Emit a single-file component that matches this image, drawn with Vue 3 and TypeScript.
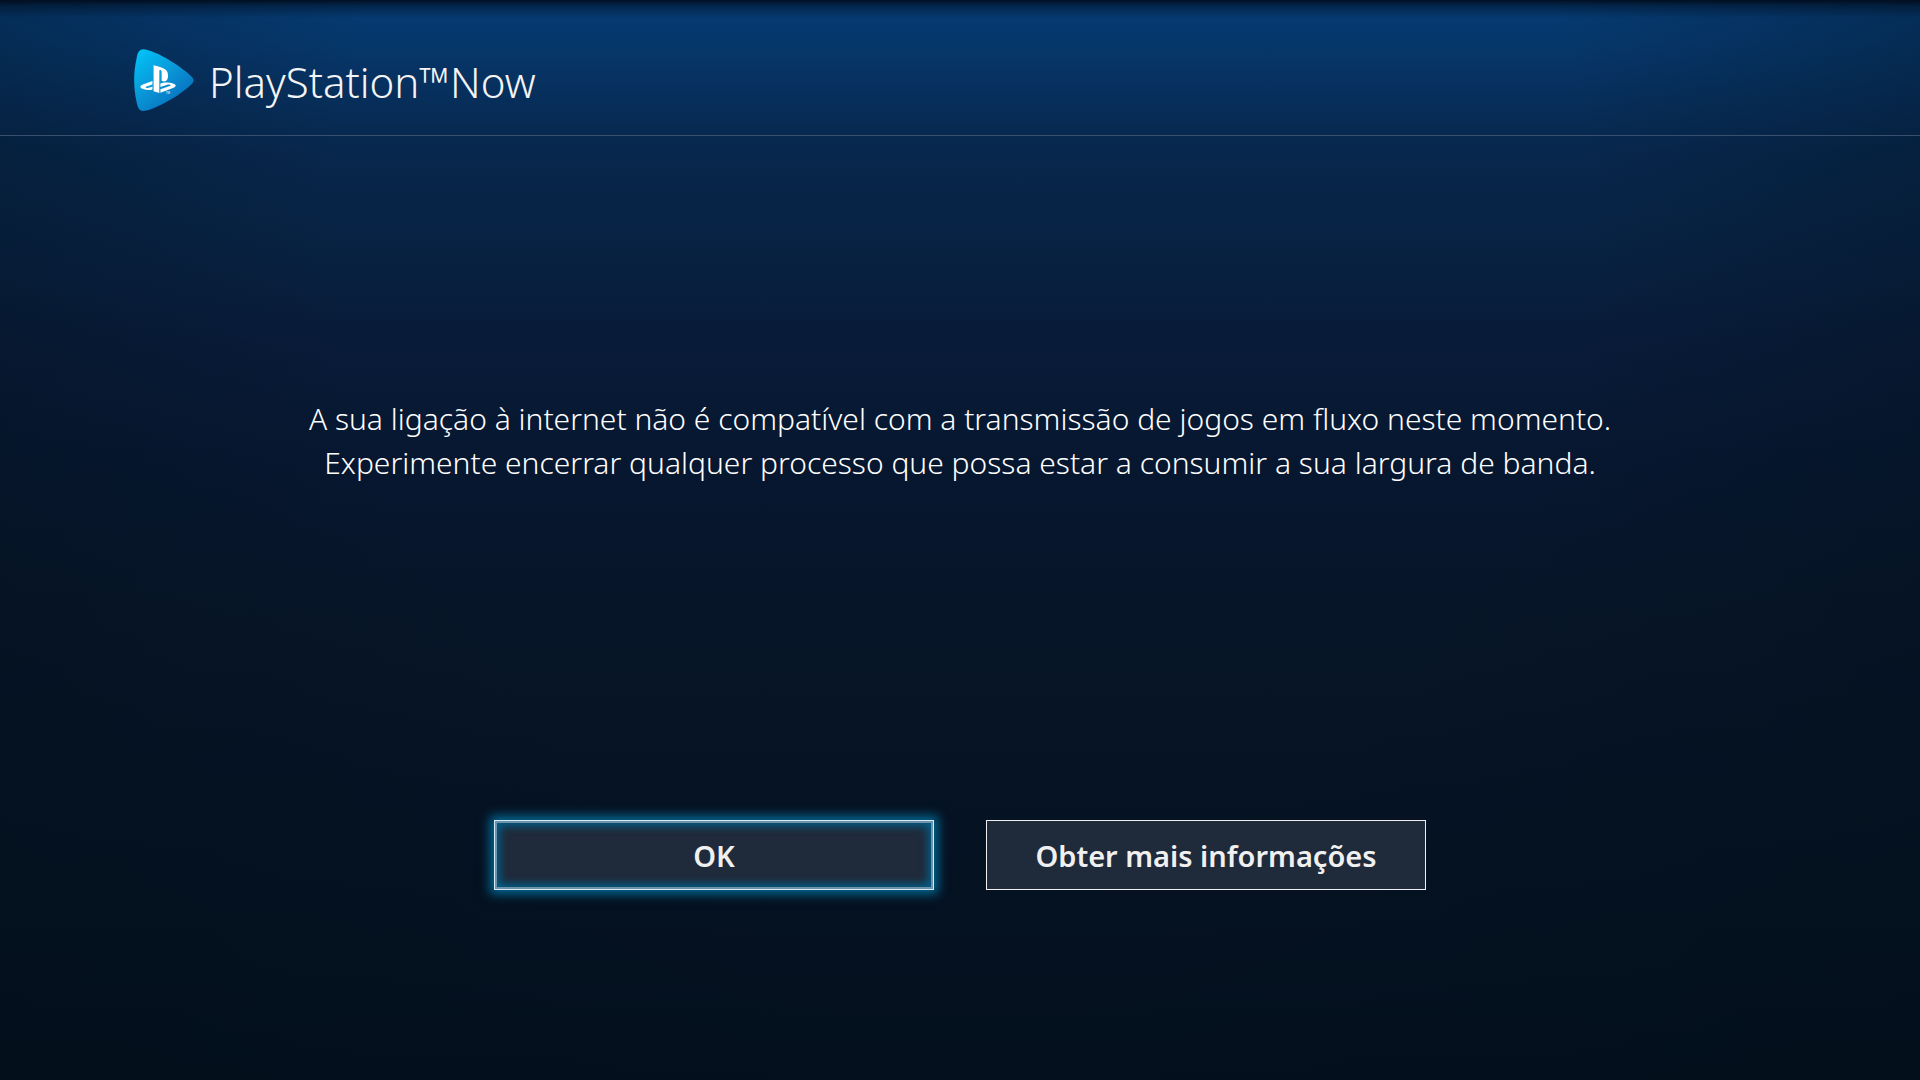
<script setup lang="ts">
import { ref } from 'vue'

interface Action {
  id: string
  label: string
}

const lines: string[] = [
  'A sua ligação à internet não é compatível com a transmissão de jogos em fluxo neste momento.',
  'Experimente encerrar qualquer processo que possa estar a consumir a sua largura de banda.',
]

const actions: Action[] = [
  { id: 'ok', label: 'OK' },
  { id: 'more', label: 'Obter mais informações' },
]

const selected = ref<string>('ok')
</script>

<template>
  <div class="screen">
    <header class="top">
      <svg class="logo" viewBox="43 38 180 186" aria-hidden="true">
        <defs>
          <linearGradient id="now" x1="0" y1="0" x2="0.8" y2="1">
            <stop offset="0" stop-color="#00c8fa" />
            <stop offset="0.5" stop-color="#0a97d8" />
            <stop offset="1" stop-color="#0668b8" />
          </linearGradient>
        </defs>
        <path
          fill="url(#now)"
          d="M70 39C96 38 173 81 213 118Q231 132 213 146C173 184 96 224 70 224C58 223 54 214 51 198C41 154 41 109 51 65C54 49 58 40 70 39Z"
        />
        <g fill="#fff">
          <path
            transform="translate(62 75.5) scale(4.42)"
            d="M8.984 2.596v17.547l3.915 1.261V6.688c0-.69.304-1.151.794-.991.636.18.76.814.76 1.505v5.875c2.441 1.193 4.362-.002 4.362-3.152 0-3.237-1.126-4.675-4.438-5.827-1.307-.448-3.728-1.186-5.39-1.502zm4.656 16.241l6.296-2.275c.715-.258.826-.625.246-.818-.586-.192-1.637-.139-2.357.123l-4.205 1.5V14.98l.24-.085s1.201-.42 2.913-.615c1.696-.18 3.785.03 5.437.661 1.848.601 2.04 1.472 1.576 2.072-.465.6-1.622 1.036-1.622 1.036l-8.544 3.107V18.86zM1.807 18.6c-1.9-.545-2.214-1.668-1.352-2.32.801-.586 2.16-1.052 2.16-1.052l5.615-2.013v2.313L4.205 17c-.705.271-.825.632-.239.826.586.195 1.637.15 2.343-.12L8.247 17v2.074c-.12.03-.256.044-.39.073-1.939.331-3.996.196-6.038-.479z"
          />
          <text class="tm" x="138" y="173">TM</text>
        </g>
      </svg>
      <h1 class="title">PlayStation™Now</h1>
    </header>

    <main class="body">
      <p class="message">
        <span v-for="line in lines" :key="line" class="line">{{ line }}</span>
      </p>
      <div class="actions">
        <button
          v-for="action in actions"
          :key="action.id"
          type="button"
          class="action"
          :class="{ selected: selected === action.id }"
          @focus="selected = action.id"
        >
          {{ action.label }}
        </button>
      </div>
    </main>
  </div>
</template>

<style>
body {
  margin: 0;
  background: #030f1a;
}
</style>

<style scoped>
.screen {
  box-sizing: border-box;
  min-height: 100vh;
  display: flex;
  flex-direction: column;
  color: #f4f4f4;
  font-family: 'Noto Sans', 'Open Sans', sans-serif;
  background:
    linear-gradient(to bottom, rgba(0, 8, 20, 0.85) 0, rgba(0, 8, 20, 0.4) 6px, rgba(0, 8, 20, 0) 18px),
    radial-gradient(ellipse 65% 120% at 50% 20%, rgba(2, 15, 26, 0) 50%, rgba(2, 15, 26, 0.5) 100%),
    linear-gradient(to bottom, #053b74 0, #06376b 4%, #072d58 10%, #07274c 14%, #082141 24%, #081b38 32%, #071730 43%, #071528 58%, #051222 80%, #04101d 100%);
}

.top {
  box-sizing: border-box;
  height: 136px;
  padding: 24px 134px 0;
  display: flex;
  align-items: center;
  gap: 15px;
  border-bottom: 1px solid #38506e;
}

.logo {
  width: 60px;
  height: 62px;
}

.tm {
  font: 9px 'Liberation Sans', sans-serif;
}

.title {
  margin: 0;
  padding-top: 4px;
  font-size: 42px;
  line-height: 56px;
  font-weight: 300;
}

.body {
  flex: 1;
  display: flex;
  flex-direction: column;
  align-items: center;
  padding: 261px 48px 96px;
}

.message {
  margin: 0;
  text-align: center;
  color: #ffffff;
  font-size: 30px;
  line-height: 44px;
  font-weight: 300;
}

.line {
  display: block;
}

.actions {
  display: flex;
  flex-wrap: wrap;
  justify-content: center;
  gap: 52px;
  margin-top: 335px;
}

.action {
  box-sizing: border-box;
  width: 440px;
  height: 70px;
  padding: 2px 0 0;
  border: 1px solid #f0f0f0;
  background: #1f2a3a;
  color: #f0f0f0;
  font-family: inherit;
  font-size: 29px;
  line-height: 44px;
  font-weight: 600;
  outline: none;
}

.action.selected {
  border-color: #d5eaf4;
  box-shadow:
    0 0 10px 4px #006a96,
    inset 0 0 0 2px #6f93aa,
    inset 0 0 8px 5px #00608a;
}
</style>
